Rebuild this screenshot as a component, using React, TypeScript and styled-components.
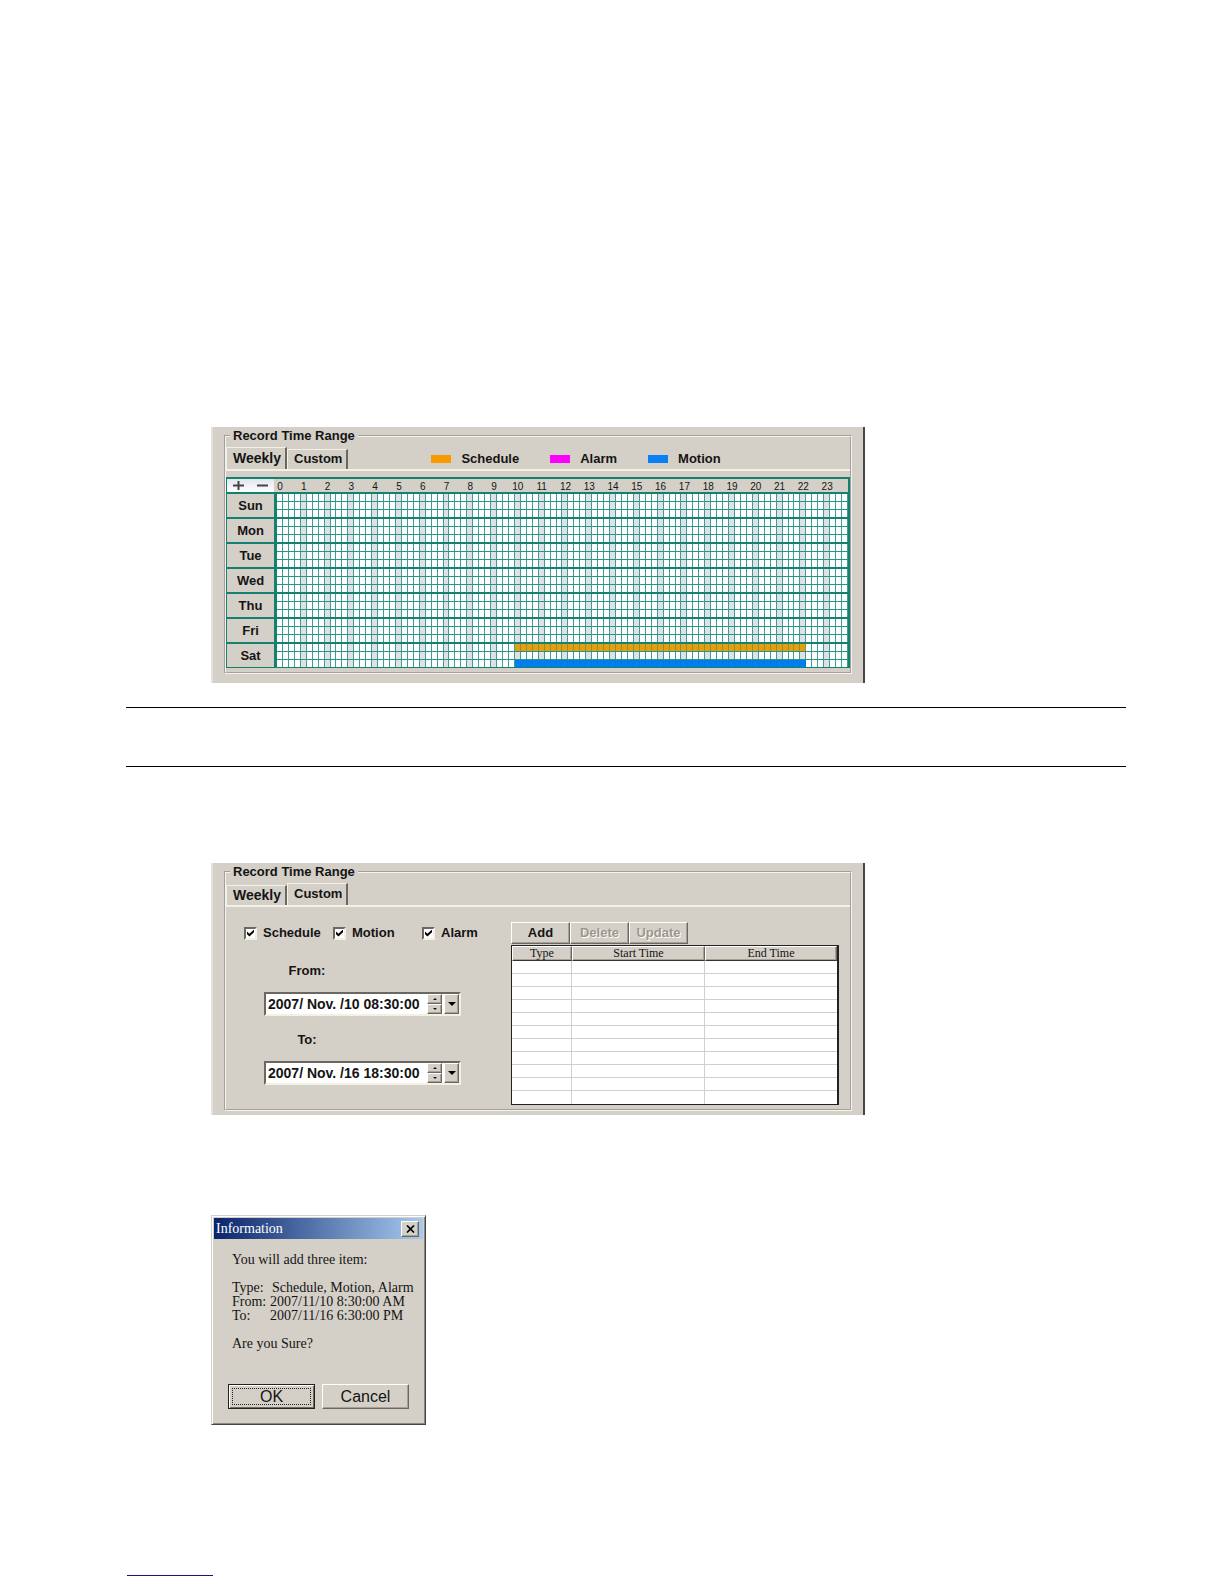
import React from "react";
import styled, { createGlobalStyle, css } from "styled-components";

const face = "#d4d0c8";
const teal = "#16806f";
const ink = "#141414";
const sans = '"Liberation Sans", Arial, sans-serif';
const serif = '"Liberation Serif", "Times New Roman", serif';

const GlobalStyle = createGlobalStyle`
  *, *::before, *::after { box-sizing: border-box; }
  body { margin: 0; background: #fff; color: ${ink}; font: bold 13px/16px ${sans}; }
  button, input { font: inherit; color: inherit; margin: 0; padding: 0; border-radius: 0; }
`;

const raised = css`
  border: 1px solid;
  border-color: #fff #6b6862 #6b6862 #fff;
  box-shadow: inset -1px -1px 0 #a5a199;
  background: ${face};
`;

const Page = styled.main`
  padding: 427px 98px 8px 126px;
`;

const Rule = styled.hr`
  margin: 24px 0 0;
  border: 0;
  height: 1px;
  background: #000;
`;

const NoteGap = styled.div`
  height: 34px;
`;

const FooterRule = styled.hr`
  margin: 150px 0 0 1px;
  width: 86px;
  border: 0;
  height: 1px;
  background: #15157a;
`;

const Figure = styled.section<{ $top?: number }>`
  margin-top: ${(p) => p.$top ?? 0}px;
  padding-left: 85px;
`;

const Panel = styled.div<{ $bottom: number }>`
  max-width: 654px;
  padding: 1px 11px ${(p) => p.$bottom}px;
  background: ${face};
  border-left: 2px solid #e4e1db;
  border-right: 2px solid #45454a;
`;

const Group = styled.fieldset`
  margin: 0;
  padding: 0 0 4px;
  min-width: 0;
  border: 2px groove #f6f3ec;
`;

const GroupTitle = styled.legend`
  margin-left: 4px;
  padding: 0 3px;
`;

const TabStrip = styled.div`
  display: flex;
  align-items: flex-end;
  height: 27px;
  border-bottom: 2px solid #f3f0e6;
`;

const Tab = styled.button<{ $active: boolean; $size: number }>`
  height: ${(p) => (p.$active ? 22 : 20)}px;
  padding: 0 4px 1px 6px;
  border: 0;
  border-top: 1px solid #f3f0e6;
  border-left: 1px solid #f3f0e6;
  border-right: 2px solid #6b6862;
  background: ${face};
  font-size: ${(p) => p.$size}px;
`;

const Legend = styled.ul`
  display: flex;
  gap: 31px;
  margin: 0 0 0 83px;
  padding: 0 0 2px;
  list-style: none;
`;

const LegendItem = styled.li<{ $color: string }>`
  display: flex;
  align-items: center;
  gap: 10px;
  &::before {
    content: "";
    width: 20px;
    height: 8px;
    background: ${(p) => p.$color};
  }
`;

const Schedule = styled.table`
  width: 100%;
  margin-top: 6px;
  border: 2px solid ${teal};
  border-width: 2px 2px 1px 1px;
  border-collapse: separate;
  border-spacing: 0;
  table-layout: fixed;
  td, th { padding: 0; }
`;

const ZoomCell = styled.td`
  width: 50px;
  height: 13px;
`;

const ZoomBar = styled.div`
  display: flex;
  width: 47px;
  height: 13px;
  justify-content: space-around;
  background: linear-gradient(#dfe7ee, #fff);
`;

const ZoomButton = styled.button`
  display: grid;
  place-items: center;
  width: 16px;
  height: 13px;
  border: 0;
  background: none;
`;

const Hours = styled.div`
  display: grid;
  grid-template-columns: repeat(24, minmax(0, 1fr));
  padding-top: 3px;
  font: 10px/10px ${sans};
`;

const Hour = styled.span`
  display: flex;
  justify-content: center;
  width: 25%;
`;

const Day = styled.th`
  height: 25px;
  border-top: 2px solid ${teal};
  border-right: 3px solid ${teal};
`;

const DayCell = styled.td`
  border-top: 2px solid ${teal};
`;

const Track = styled.div`
  display: grid;
  grid-template-columns: repeat(96, minmax(0, 1fr));
  height: 8px;
  border-bottom: 1px solid #2c9383;
  &:last-child { height: 7px; border-bottom: 0; }
`;

const slotFill = {
  open: "#fbffff",
  hour: "#dfe1e8",
  schedule: "#e0a010",
  motion: "#0080f0",
};

const Slot = styled.i<{ $fill: keyof typeof slotFill }>`
  background: ${(p) => slotFill[p.$fill]};
  border-right: 1px solid
    ${(p) => (p.$fill === "motion" ? "#0078e0" : p.$fill === "schedule" ? "#a08830" : "#429c8f")};
`;

const CustomBody = styled.div`
  display: grid;
  grid-template-columns: 285px minmax(0, 1fr);
  padding: 15px 11px 0 0;
`;

const Form = styled.div`
  padding-left: 18px;
`;

const CheckRow = styled.div`
  display: grid;
  grid-template-columns: repeat(3, 89px);
  height: 22px;
  margin-bottom: 17px;
`;

const CheckLabel = styled.label`
  display: flex;
  align-items: center;
  gap: 6px;
`;

const Check = styled.input`
  appearance: none;
  display: grid;
  place-content: center;
  width: 13px;
  height: 13px;
  flex: none;
  background: #fff;
  border: 2px solid;
  border-color: #6b6862 #f3f0e6 #f3f0e6 #6b6862;
  &:checked::before {
    content: "";
    width: 7px;
    height: 7px;
    background: #000;
    clip-path: polygon(0 30%, 35% 60%, 100% 0, 100% 38%, 35% 100%, 0 68%);
  }
`;

const Field = styled.div`
  width: 197px;
  margin: 0 0 14px 20px;
`;

const FieldLabel = styled.label`
  display: block;
  width: 86px;
  margin-bottom: 11px;
  line-height: 20px;
  text-align: center;
`;

const DateBox = styled.div`
  display: flex;
  gap: 2px;
  height: 24px;
  background: #fff;
  border: 2px solid;
  border-color: #6b6862 #f3f0e6 #f3f0e6 #6b6862;
`;

const DateInput = styled.input`
  flex: 1;
  min-width: 0;
  padding-left: 2px;
  border: 0;
  background: none;
  font-size: 14px;
  outline: 0;
`;

const Spinner = styled.div`
  display: grid;
  grid-template-rows: 1fr 1fr;
  width: 15px;
`;

const GlyphButton = styled.button`
  ${raised}
  display: grid;
  place-items: center;
  min-width: 15px;
`;

const Toolbar = styled.div`
  display: flex;
  margin-bottom: 1px;
`;

const ToolButton = styled.button`
  ${raised}
  width: 59px;
  height: 22px;
  &:disabled {
    color: #9b978f;
    text-shadow: 1px 1px 0 #fff;
  }
`;

const Items = styled.table`
  width: 100%;
  table-layout: fixed;
  border: 1px solid #222;
  border-right-width: 2px;
  border-collapse: separate;
  border-spacing: 0;
  background: #fff;
  th {
    ${raised}
    height: 15px;
    padding: 0;
    border-bottom-color: #333;
    font: 12px/13px ${serif};
  }
  td {
    height: 13px;
    padding: 0;
    border-bottom: 1px solid #cfcfcf;
    border-right: 1px solid #cfcfcf;
  }
  td:last-child { border-right: 0; }
  tr:last-child td { border-bottom: 0; }
`;

const ItemHead = styled.th<{ $width?: number }>`
  width: ${(p) => (p.$width ? `${p.$width}px` : "auto")};
`;

const Dialog = styled.div`
  max-width: 215px;
  padding: 2px 2px 15px;
  background: ${face};
  border: 1px solid;
  border-color: #d4d0c8 #45454a #45454a #d4d0c8;
  box-shadow: inset 1px 1px 0 #fff, inset -1px -1px 0 #8b8880;
`;

const TitleBar = styled.header`
  display: flex;
  align-items: center;
  justify-content: space-between;
  height: 21px;
  padding: 0 4px 0 2px;
  background: linear-gradient(90deg, #0a246a, #a6caf0);
  color: #fff;
  font: 14px/20px ${serif};
`;

const CloseButton = styled.button`
  ${raised}
  display: grid;
  place-items: center;
  width: 18px;
  height: 16px;
`;

const Message = styled.div`
  padding: 14px 0 0 18px;
  font: 14px/14px ${serif};
  white-space: nowrap;
`;

const Line = styled.p`
  margin: 0;
`;

const Facts = styled.dl`
  display: grid;
  grid-template-columns: 38px 1fr;
  margin: 14px 0;
  dt, dd { margin: 0; }
`;

const Value = styled.dd<{ $indent?: boolean }>`
  padding-left: ${(p) => (p.$indent ? 2 : 0)}px;
`;

const Actions = styled.div`
  display: flex;
  justify-content: center;
  gap: 7px;
  margin-top: 33px;
`;

const DialogButton = styled.button<{ $primary?: boolean }>`
  ${raised}
  width: 87px;
  height: 25px;
  padding: 2px;
  font: 16px/18px ${sans};
  ${(p) =>
    p.$primary &&
    css`
      border-color: #222;
      box-shadow: inset 1px 1px 0 #fff, inset -1px -1px 0 #6b6862;
    `}
`;

const Focus = styled.span`
  display: block;
  margin: 0 1px;
  border: 1px dotted #222;
  line-height: 15px;
`;

const days = ["Sun", "Mon", "Tue", "Wed", "Thu", "Fri", "Sat"];
const tracks = ["schedule", "alarm", "motion"] as const;
const SLOT_FROM = 40;
const SLOT_TO = 89;

function fillFor(day: string, track: string, slot: number): keyof typeof slotFill {
  if (day === "Sat" && slot >= SLOT_FROM && slot < SLOT_TO) {
    if (track === "schedule") return "schedule";
    if (track === "motion") return "motion";
  }
  return slot > 0 && slot % 4 === 0 ? "hour" : "open";
}

const tabs = [
  { name: "Weekly", size: 14 },
  { name: "Custom", size: 13 },
];

function Tabs({ active, children }: { active: string; children?: React.ReactNode }) {
  return (
    <TabStrip>
      {tabs.map(({ name, size }) => (
        <Tab key={name} type="button" $size={size} $active={name === active} aria-pressed={name === active}>
          {name}
        </Tab>
      ))}
      {children}
    </TabStrip>
  );
}

function WeeklyPanel() {
  return (
    <Panel $bottom={9}>
      <Group>
        <GroupTitle>Record Time Range</GroupTitle>
        <Tabs active="Weekly">
          <Legend>
            <LegendItem $color="#f79a00">Schedule</LegendItem>
            <LegendItem $color="#fb00fb">Alarm</LegendItem>
            <LegendItem $color="#0a80f5">Motion</LegendItem>
          </Legend>
        </Tabs>
        <Schedule>
          <tbody>
            <tr>
              <ZoomCell>
                <ZoomBar>
                  <ZoomButton type="button" aria-label="Add range">
                    <svg width="11" height="11" viewBox="0 0 11 11">
                      <path d="M0 5.5H11M5.5 1V10" stroke="#444" strokeWidth="2" />
                    </svg>
                  </ZoomButton>
                  <ZoomButton type="button" aria-label="Remove range">
                    <svg width="11" height="11" viewBox="0 0 11 11">
                      <path d="M0 5.5H11" stroke="#444" strokeWidth="2" />
                    </svg>
                  </ZoomButton>
                </ZoomBar>
              </ZoomCell>
              <td>
                <Hours>
                  {Array.from({ length: 24 }, (_, h) => (
                    <Hour key={h}>{h}</Hour>
                  ))}
                </Hours>
              </td>
            </tr>
            {days.map((day) => (
              <tr key={day}>
                <Day scope="row">{day}</Day>
                <DayCell>
                  {tracks.map((track) => (
                    <Track key={track}>
                      {Array.from({ length: 96 }, (_, s) => (
                        <Slot key={s} $fill={fillFor(day, track, s)} />
                      ))}
                    </Track>
                  ))}
                </DayCell>
              </tr>
            ))}
          </tbody>
        </Schedule>
      </Group>
    </Panel>
  );
}

function DateField({ id, label, value }: { id: string; label: string; value: string }) {
  return (
    <Field>
      <FieldLabel htmlFor={id}>{label}</FieldLabel>
      <DateBox>
        <DateInput id={id} type="text" defaultValue={value} />
        <Spinner>
          <GlyphButton type="button" aria-label="Increase">
            <svg width="4" height="2" viewBox="0 0 4 2"><path d="M0 2L2 0L4 2Z" fill="#111" /></svg>
          </GlyphButton>
          <GlyphButton type="button" aria-label="Decrease">
            <svg width="4" height="2" viewBox="0 0 4 2"><path d="M0 0L2 2L4 0Z" fill="#111" /></svg>
          </GlyphButton>
        </Spinner>
        <GlyphButton type="button" aria-label="Open calendar">
          <svg width="8" height="4" viewBox="0 0 8 4"><path d="M0 0H8L4 4Z" fill="#000" /></svg>
        </GlyphButton>
      </DateBox>
    </Field>
  );
}

function CustomPanel() {
  return (
    <Panel $bottom={4}>
      <Group>
        <GroupTitle>Record Time Range</GroupTitle>
        <Tabs active="Custom" />
        <CustomBody>
          <Form>
            <CheckRow>
              {["Schedule", "Motion", "Alarm"].map((name) => (
                <CheckLabel key={name}>
                  <Check type="checkbox" defaultChecked />
                  {name}
                </CheckLabel>
              ))}
            </CheckRow>
            <DateField id="from" label="From:" value="2007/ Nov. /10 08:30:00" />
            <DateField id="to" label="To:" value="2007/ Nov. /16 18:30:00" />
          </Form>
          <div>
            <Toolbar>
              <ToolButton type="button">Add</ToolButton>
              <ToolButton type="button" disabled>Delete</ToolButton>
              <ToolButton type="button" disabled>Update</ToolButton>
            </Toolbar>
            <Items>
              <thead>
                <tr>
                  <ItemHead $width={60}>Type</ItemHead>
                  <ItemHead $width={133}>Start Time</ItemHead>
                  <ItemHead>End Time</ItemHead>
                </tr>
              </thead>
              <tbody>
                {Array.from({ length: 11 }, (_, r) => (
                  <tr key={r}><td /><td /><td /></tr>
                ))}
              </tbody>
            </Items>
          </div>
        </CustomBody>
      </Group>
    </Panel>
  );
}

function ConfirmDialog() {
  return (
    <Dialog role="dialog" aria-labelledby="confirm-title">
      <TitleBar>
        <span id="confirm-title">Information</span>
        <CloseButton type="button" aria-label="Close">
          <svg width="9" height="8" viewBox="0 0 9 8">
            <path d="M1 0.5L8 7.5M8 0.5L1 7.5" stroke="#000" strokeWidth="1.7" />
          </svg>
        </CloseButton>
      </TitleBar>
      <Message>
        <Line>You will add three item:</Line>
        <Facts>
          <dt>Type:</dt>
          <Value $indent>Schedule, Motion, Alarm</Value>
          <dt>From:</dt>
          <Value>2007/11/10 8:30:00 AM</Value>
          <dt>To:</dt>
          <Value>2007/11/16 6:30:00 PM</Value>
        </Facts>
        <Line>Are you Sure?</Line>
      </Message>
      <Actions>
        <DialogButton type="button" $primary>
          <Focus>OK</Focus>
        </DialogButton>
        <DialogButton type="button">Cancel</DialogButton>
      </Actions>
    </Dialog>
  );
}

export default function App() {
  return (
    <>
      <GlobalStyle />
      <Page>
        <Figure>
          <WeeklyPanel />
        </Figure>
        <Rule />
        <NoteGap />
        <Rule />
        <Figure $top={96}>
          <CustomPanel />
        </Figure>
        <Figure $top={100}>
          <ConfirmDialog />
        </Figure>
        <FooterRule />
      </Page>
    </>
  );
}
